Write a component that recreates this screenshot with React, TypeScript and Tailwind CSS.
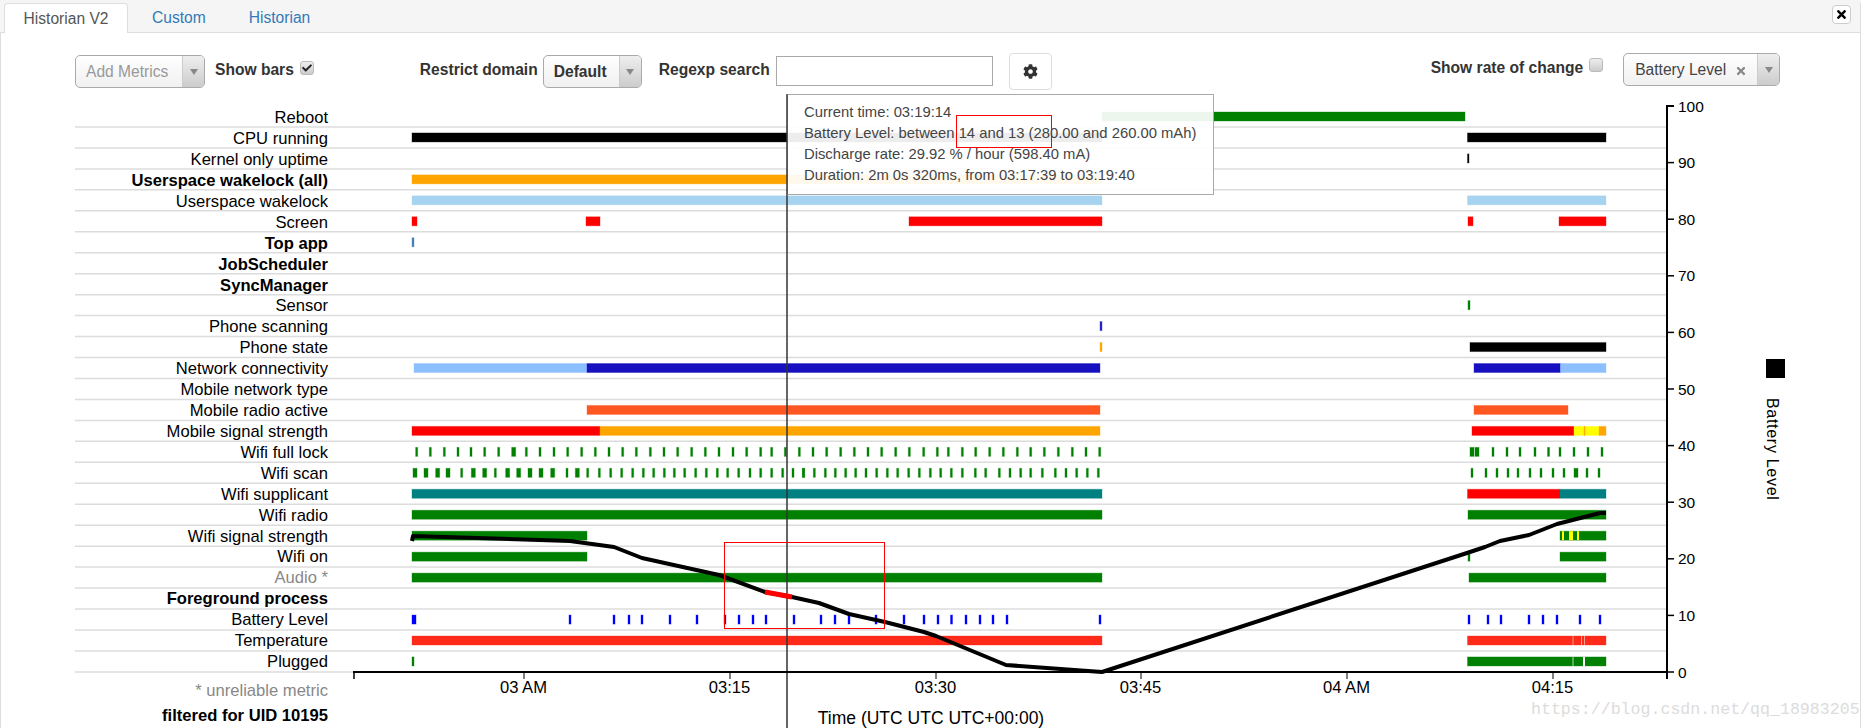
import { FaCog, FaTimes, FaCheck } from "react-icons/fa";

const GREEN = "#008000";
const ROW_TOP = 106;
const ROW_H = 20.96;

const labels: { text: string; bold?: boolean; muted?: boolean }[] = [
  { text: "Reboot" },
  { text: "CPU running" },
  { text: "Kernel only uptime" },
  { text: "Userspace wakelock (all)", bold: true },
  { text: "Userspace wakelock" },
  { text: "Screen" },
  { text: "Top app", bold: true },
  { text: "JobScheduler", bold: true },
  { text: "SyncManager", bold: true },
  { text: "Sensor" },
  { text: "Phone scanning" },
  { text: "Phone state" },
  { text: "Network connectivity" },
  { text: "Mobile network type" },
  { text: "Mobile radio active" },
  { text: "Mobile signal strength" },
  { text: "Wifi full lock" },
  { text: "Wifi scan" },
  { text: "Wifi supplicant" },
  { text: "Wifi radio" },
  { text: "Wifi signal strength" },
  { text: "Wifi on" },
  { text: "Audio *", muted: true },
  { text: "Foreground process", bold: true },
  { text: "Battery Level" },
  { text: "Temperature" },
  { text: "Plugged" },
];

// [row, from, to, colour]
const bars: [number, number, number, string][] = [
  [0, 1102, 1465, GREEN],
  [1, 412, 1102, "#000"],
  [1, 1467.5, 1606, "#000"],
  [2, 1467.5, 1469, "#000"],
  [3, 412, 1102, "#ffa500"],
  [4, 412, 1102, "#a6d3ef"],
  [4, 1467.5, 1606, "#a6d3ef"],
  [5, 412, 417, "#f00"],
  [5, 586, 600, "#f00"],
  [5, 909, 1102, "#f00"],
  [5, 1468, 1473, "#f00"],
  [5, 1559, 1606, "#f00"],
  [6, 412, 414, "#4682b4"],
  [9, 1468, 1470, GREEN],
  [10, 1100, 1102, "#2222cc"],
  [11, 1100, 1102, "#ffa500"],
  [11, 1470, 1606, "#000"],
  [12, 414, 587, "#8bbfff"],
  [12, 587, 1100, "#1710c0"],
  [12, 1474, 1560.5, "#1710c0"],
  [12, 1560.5, 1606, "#8bbfff"],
  [14, 587, 1100, "#ff5722"],
  [14, 1474, 1568, "#ff5722"],
  [15, 412, 600, "#f00"],
  [15, 600, 1100, "#ffa500"],
  [15, 1472, 1574, "#f00"],
  [15, 1574, 1599, "#ff0"],
  [15, 1584, 1585, "#ffa500"],
  [15, 1599, 1606, "#ffa500"],
  [18, 412, 1102, "#008080"],
  [18, 1467.5, 1560, "#f00"],
  [18, 1560, 1606, "#008080"],
  [19, 412, 1102, GREEN],
  [19, 1468, 1606, GREEN],
  [20, 412, 587, GREEN],
  [20, 1560, 1606, GREEN],
  [21, 412, 587, GREEN],
  [21, 1468, 1470, GREEN],
  [21, 1560, 1606, GREEN],
  [22, 412, 1102, GREEN],
  [22, 1469, 1606, GREEN],
  [25, 412, 1102, "#ff2a1a"],
  [25, 1467.5, 1606, "#ff2a1a"],
  [26, 412, 414, GREEN],
  [26, 1467.5, 1606, GREEN],
];

const zoomA = (z: number) => 410 + z / 3;
const zoomB = (z: number) => 800 + z / 3;

const fullLock = [
  ...[20, 61, 103, 144, 183, 224, 266, 349, 390, 432, 473, 515, 556, 597, 638, 679, 721, 762, 803, 845, 886, 927, 969, 1010, 1052, 1085, 1126, 1168].map(zoomA),
  ...[39, 80, 122, 163, 204, 245, 287, 328, 371, 412, 445, 487, 527, 569, 610, 652, 692, 733, 775, 817, 858, 899].map(zoomB),
  1493, 1507, 1520, 1535, 1548.5, 1560, 1574, 1588, 1602,
];
const fullLockWide = [zoomA(311), 1472, 1477];

const scan = [
  ...[155, 256, 471, 533, 568, 602, 635, 668, 700, 731, 763, 793, 824, 857, 889, 922, 953, 986, 1020, 1052, 1085, 1118, 1149, 1181].map(zoomA),
  ...[10, 43, 76, 106, 137, 167, 198, 230, 262, 293, 326, 358, 391, 422, 454, 487, 526, 557, 598, 630, 662, 692, 727, 766, 798, 830, 862, 895].map(zoomB),
  1472, 1486, 1497, 1508, 1518, 1530, 1541, 1553, 1564, 1587, 1599,
];
const scanWide = [...[15, 48, 83, 114, 190, 224, 293, 326, 360, 393, 428, 502].map(zoomA), 1576];

const batteryTicks = [
  570, 614, 629, 642, 670, 697, 725, 739, 753, 766, 794, 821, 835, 849, 876, 904, 924, 938, 951.5, 966, 980, 993, 1007, 1100,
  1469, 1488, 1501, 1529, 1543, 1557, 1580, 1600,
];

const linePoints =
  "412,541 413,536 570,541 614,547 642,558 719,575 765,592 792,597 819,603 849,614 885,622 924,632 936,636 1006,665 1102,672 1467,553 1485,547 1500,541 1529,535 1557,524 1600,513 1606,513";

const yTicks = [100, 90, 80, 70, 60, 50, 40, 30, 20, 10, 0];
const xTicks: [number, string][] = [
  [524, "03 AM"],
  [730, "03:15"],
  [936, "03:30"],
  [1141, "03:45"],
  [1347, "04 AM"],
  [1553, "04:15"],
];

const barY = (row: number) => ROW_TOP + ROW_H * row + 6;
const labelY = (row: number) => ROW_TOP + ROW_H * row + (row <= 8 ? 17 : row >= 21 ? 16 : 16.5);

function Bar({ row, x, w, color }: { row: number; x: number; w: number; color: string }) {
  return <rect x={x} y={barY(row)} width={w} height={9} fill={color} stroke={color} strokeOpacity={0.35} />;
}

function Chart() {
  return (
    <svg className="block" width={1872} height={634} viewBox="0 94 1872 634">
      {labels.map((l, i) => (
        <g key={l.text}>
          <line x1={75} x2={1667} y1={ROW_TOP + ROW_H * (i + 1)} y2={ROW_TOP + ROW_H * (i + 1)} stroke="#dcdcdc" strokeWidth={1.5} />
          <text
            x={328}
            y={labelY(i)}
            textAnchor="end"
            fontSize={16.6}
            fontWeight={l.bold ? 700 : 400}
            fill={l.muted ? "#888" : "#000"}
          >
            {l.text}
          </text>
        </g>
      ))}

      {bars.map(([row, a, b, c], i) => (
        <Bar key={i} row={row} x={a} w={b - a} color={c} />
      ))}
      {fullLock.map((x) => <Bar key={x} row={16} x={x - 1} w={2} color={GREEN} />)}
      {fullLockWide.map((x) => <Bar key={x} row={16} x={x - 2} w={4} color={GREEN} />)}
      {scan.map((x) => <Bar key={x} row={17} x={x - 1} w={2} color={GREEN} />)}
      {scanWide.map((x) => <Bar key={x} row={17} x={x - 2} w={4} color={GREEN} />)}
      <Bar row={24} x={412} w={4} color="#0000ff" />
      {batteryTicks.map((x) => <Bar key={x} row={24} x={x - 1} w={2} color="#0000ff" />)}

      {/* stripes inside the last segments */}
      <rect x={1562} y={barY(20)} width={2} height={9} fill="#ff0" />
      <rect x={1569} y={barY(20)} width={4} height={9} fill="#ff0" />
      <rect x={1577} y={barY(20)} width={2} height={9} fill="#ff0" />
      <rect x={1572.5} y={barY(25)} width={1} height={9} fill="#ff9a90" />
      <rect x={1581} y={barY(25)} width={1} height={9} fill="#ff9a90" />
      <rect x={1584} y={barY(25)} width={1} height={9} fill="#ff9a90" />
      <rect x={1572.5} y={barY(26)} width={1} height={9} fill="#b5d9b5" />
      <rect x={1583} y={barY(26)} width={2} height={9} fill="#fff" />

      <line x1={787} x2={787} y1={94} y2={728} stroke="#333" strokeWidth={1.5} />

      <polyline points={linePoints} fill="none" stroke="#000" strokeWidth={4} strokeLinejoin="round" />
      <line x1={765} y1={592} x2={792} y2={597} stroke="#f00" strokeWidth={5} />

      {/* y axis */}
      <line x1={1667} x2={1667} y1={105} y2={679} stroke="#000" strokeWidth={2} />
      <line x1={1667} x2={1674} y1={106} y2={106} stroke="#000" strokeWidth={2} />
      {yTicks.map((v) => {
        const y = 672 - v * 5.66;
        return (
          <g key={v}>
            <line x1={1667} x2={1674} y1={y} y2={y} stroke="#000" strokeWidth={1.5} />
            <text x={1678} y={y + 5.5} fontSize={15.5} fill="#000">{v}</text>
          </g>
        );
      })}

      {/* x axis */}
      <line x1={353} x2={1667} y1={672} y2={672} stroke="#000" strokeWidth={2} />
      <line x1={354} x2={354} y1={672} y2={679} stroke="#000" strokeWidth={1.5} />
      {xTicks.map(([x, t]) => (
        <g key={t}>
          <line x1={x} x2={x} y1={672} y2={679} stroke="#000" />
          <text x={x - 0.5} y={693} fontSize={16.6} textAnchor="middle" fill="#000">{t}</text>
        </g>
      ))}
      <text x={931} y={724} fontSize={17.5} textAnchor="middle" fill="#000">Time (UTC UTC UTC+00:00)</text>

      <text x={328} y={696} fontSize={16.6} textAnchor="end" fill="#888">* unreliable metric</text>
      <text x={328} y={721} fontSize={16.6} fontWeight={700} textAnchor="end" fill="#000">filtered for UID 10195</text>

      {/* legend */}
      <rect x={1766} y={359} width={19} height={19} fill="#000" />
      <text transform="translate(1767 398) rotate(90)" fontSize={16} letterSpacing={0.7} fill="#000">Battery Level</text>

      <text x={1531} y={714} fontSize={16.6} fontFamily="'Liberation Mono', monospace" fill="#dcdcdc">
        https://blog.csdn.net/qq_18983205
      </text>
    </svg>
  );
}

function Arrow() {
  return (
    <span className="flex h-full w-[22px] items-center justify-center rounded-r-[4px] border-l border-[#ccc] bg-gradient-to-b from-[#eee] to-[#ccc]">
      <svg width="8" height="6" viewBox="0 0 8 6">
        <path d="M0 0H8L4 6Z" fill="#888" />
      </svg>
    </span>
  );
}

function SelectBox({ className, children }: { className: string; children: React.ReactNode }) {
  return (
    <div className={`flex shrink-0 items-center justify-between rounded-[5px] border border-[#aaa] bg-gradient-to-b from-white to-[#f0f0f0] ${className}`}>
      {children}
      <Arrow />
    </div>
  );
}

function Check({ on }: { on?: boolean }) {
  return (
    <span className="flex h-[14px] w-[14px] shrink-0 items-center justify-center rounded-[3px] border border-[#bbb] bg-gradient-to-b from-[#eee] to-[#ccc]">
      {on && <FaCheck className="text-[10px] text-[#222]" />}
    </span>
  );
}

function Toolbar() {
  return (
    <div className="flex h-[61px] items-start pl-[75px] text-[15.6px]">
      <SelectBox className="mt-[22px] h-[33px] w-[130px]">
        <span className="pl-[10px] text-[#999]">Add Metrics</span>
      </SelectBox>
      <div className="ml-[10px] mt-[27px] flex items-center gap-[6px] font-bold leading-5 text-[#333]">
        <span>Show bars</span>
        <span className="-mt-[4px]"><Check on /></span>
      </div>
      <div className="ml-[106px] mt-[27px] font-bold leading-5 text-[#333]">Restrict domain</div>
      <SelectBox className="ml-[5px] mt-[22px] h-[33px] w-[99px]">
        <span className="pl-[10px] font-bold text-[#333]">Default</span>
      </SelectBox>
      <div className="ml-[17px] mt-[27px] font-bold leading-5 text-[#333]">Regexp search</div>
      <input className="ml-[6px] mt-[23px] h-[30px] w-[217px] border border-[#aaa] bg-white" />
      <button className="ml-[16px] mt-[20px] flex h-[37px] w-[43px] items-center justify-center rounded-[4px] border border-[#ddd] bg-white text-[#333]">
        <FaCog className="text-[15px]" />
      </button>
      <div className="ml-[379px] mt-[25px] flex items-center gap-[6px] font-bold leading-5 text-[#333]">
        <span>Show rate of change</span>
        <span className="-mt-[6px]"><Check /></span>
      </div>
      <SelectBox className="ml-[20px] mt-[20px] h-[33px] w-[157px]">
        <span className="flex items-center gap-[9px] pl-[11px] text-[#444]">
          Battery Level
          <FaTimes className="mt-[4px] text-[12px] text-[#888]" />
        </span>
      </SelectBox>
    </div>
  );
}

export default function App() {
  return (
    <div className="relative h-[728px] w-[1872px] overflow-hidden bg-white font-['Liberation_Sans',Arial,sans-serif] text-[#333]">
      <div className="absolute left-0 top-0 h-[728px] w-[1861px] rounded-t-[4px] border border-b-0 border-[#ddd]" />

      <div className="relative flex h-[33px] w-[1860px] items-end border-b border-[#ddd] bg-[#f5f5f5] pl-[4px] text-[15.6px]">
        <div className="-mb-px flex h-[30px] w-[124px] items-center justify-center rounded-t-[4px] border border-b-0 border-[#ddd] bg-white text-[#555]">
          Historian V2
        </div>
        <div className="ml-[24px] flex h-[29px] items-center text-[#337ab7]">Custom</div>
        <div className="ml-[43px] flex h-[29px] items-center text-[#337ab7]">Historian</div>
        <button className="absolute left-[1832px] top-[5px] flex h-[19px] w-[19px] items-center justify-center rounded-[4px] border border-[#ccc] bg-white text-black">
          <FaTimes className="text-[13px]" />
        </button>
      </div>

      <Toolbar />

      <Chart />

      {/* hover card over the chart */}
      <div className="absolute left-[787px] top-[94px] h-[101px] w-[427px] border border-[#aaa] border-l-[#555] bg-white/[0.93] pl-[16px] pt-[7px] text-[14.8px] leading-[21px] text-[#444]">
        <div>Current time: 03:19:14</div>
        <div>Battery Level: between 14 and 13 (280.00 and 260.00 mAh)</div>
        <div>Discharge rate: 29.92 % / hour (598.40 mA)</div>
        <div>Duration: 2m 0s 320ms, from 03:17:39 to 03:19:40</div>
      </div>

      {/* hand-drawn red marks on the screenshot */}
      <div className="absolute left-[956px] top-[115px] h-[33px] w-[96px] border border-[#f00]" />
      <div className="absolute left-[724px] top-[542px] h-[87px] w-[161px] border border-[#f00]" />
    </div>
  );
}
